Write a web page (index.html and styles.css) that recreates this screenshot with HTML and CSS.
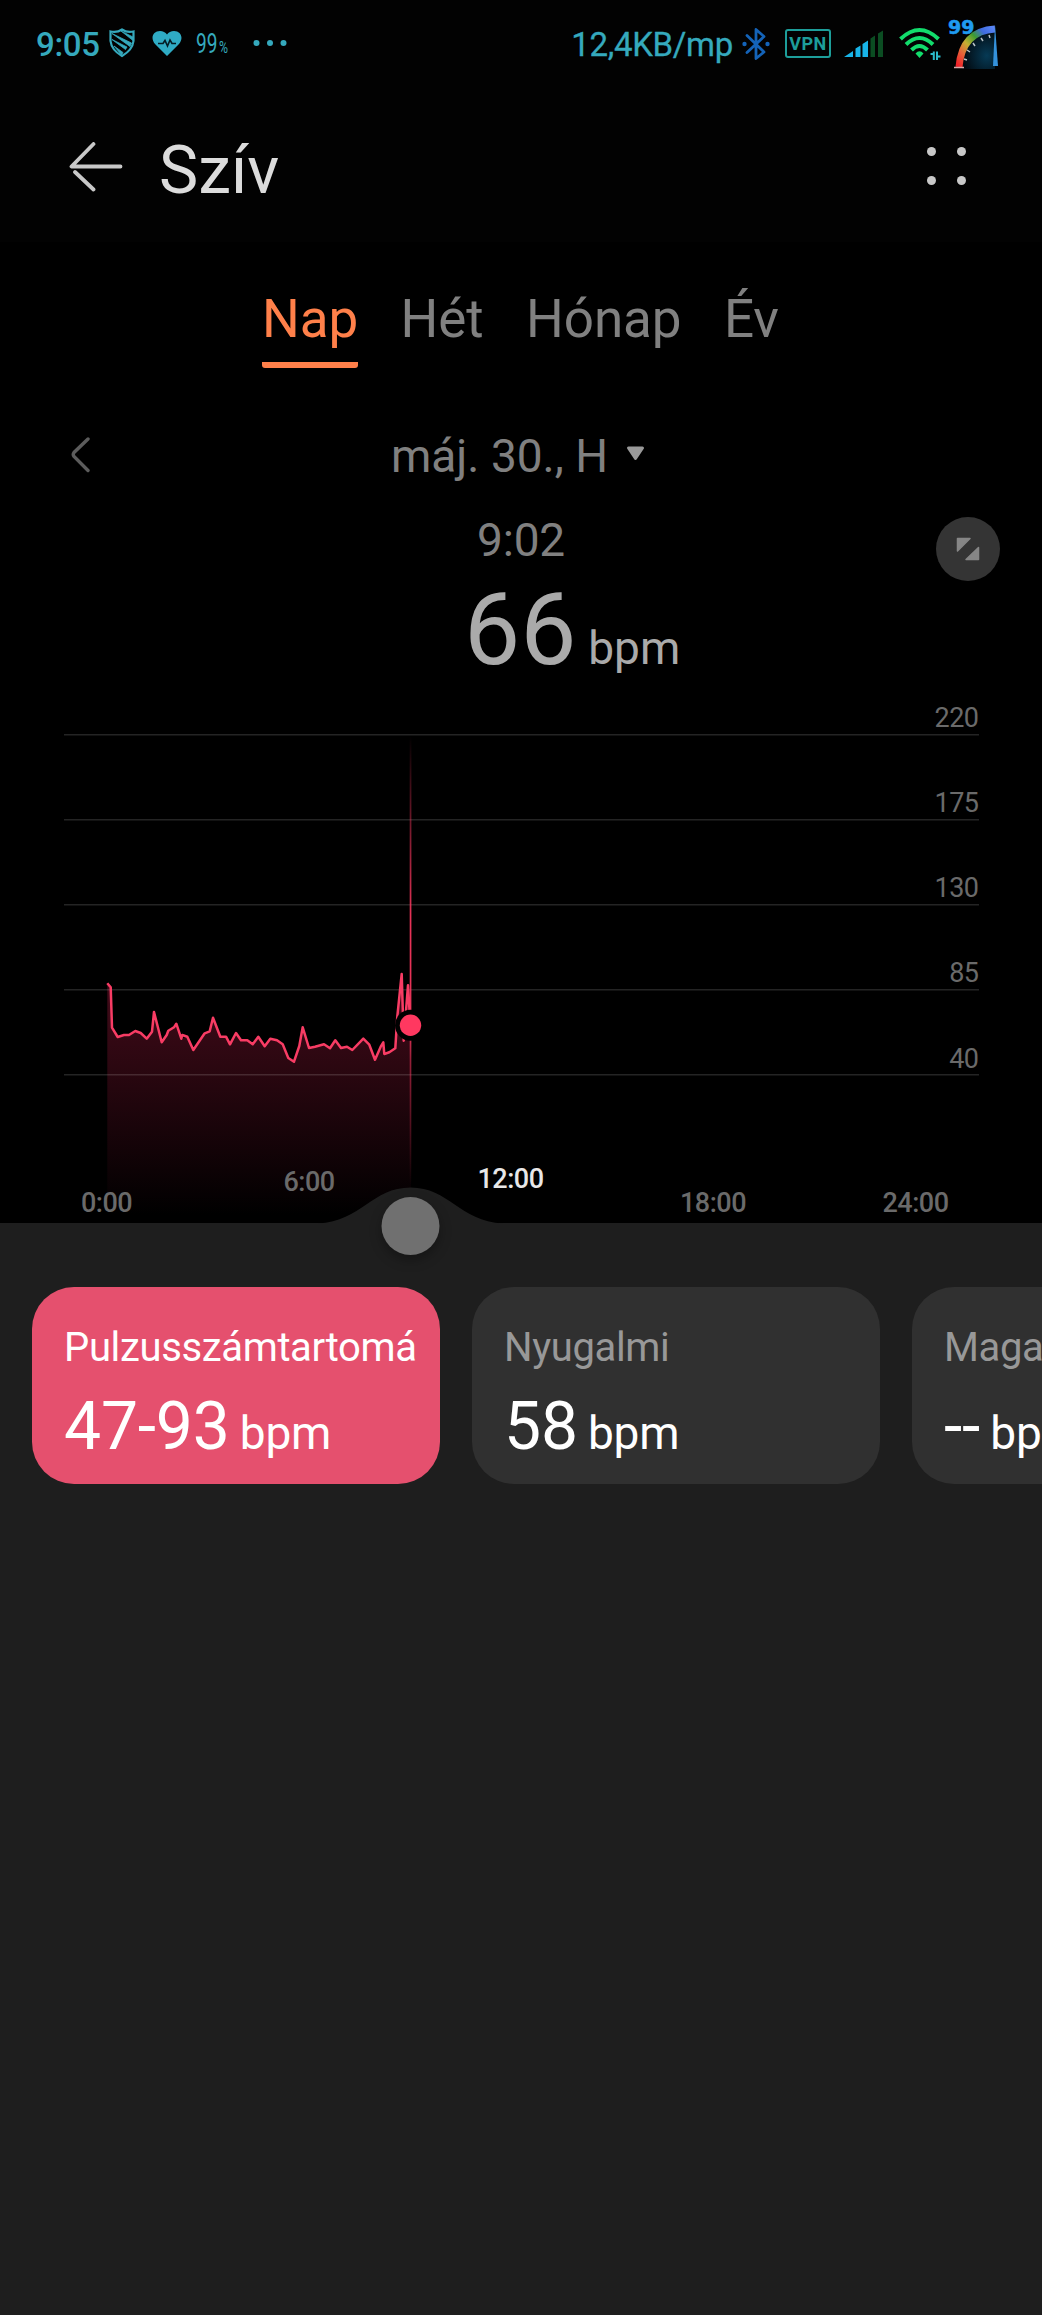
FILE: index.html
```html
<!DOCTYPE html>
<html lang="hu">
<head>
    <meta charset="UTF-8">
    <meta name="viewport" content="width=device-width, initial-scale=1.0">
    <title>Szív</title>
    <link rel="stylesheet" href="styles.css">
</head>
<body>
    <div class="status-bar">
        <div class="status-left">
            <span class="clock">9:05</span>
            <svg class="icon-shield" width="26" height="30" viewBox="0 0 26 30">
                <path d="M1.500 3.500 Q8 5 13 1.500 Q18 5 24.500 3.500 V13 Q23.500 22 13 28 Q2.500 22 1.500 13 Z" fill="none" stroke="#35a9bd" stroke-width="2.200"/>
                <path d="M12 3 L24 9 V12.500 Z M3 5.500 L22.500 15 L21 18.500 Z M3 11.500 L18 19 L16.500 21.500 Z M5 18 L14 24.500 L12.500 27 Z" fill="#35a9bd" stroke="#35a9bd" stroke-width="0.800"/>
            </svg>
            <svg class="icon-heart" width="30" height="27" viewBox="0 0 30 27">
                <path d="M15 26 L3 14 C-2 8 1 1 8 1 C11 1 13.500 2.500 15 4.500 C16.500 2.500 19 1 22 1 C29 1 32 8 27 14 Z" fill="#2fabc4"/>
                <path d="M6 13.500 H11 L13 10.500 L15.500 16 L18 10 L20 13.500 H24" fill="none" stroke="#041c24" stroke-width="1.600"/>
            </svg>
            <svg class="battery" width="34" height="30" viewBox="0 0 34 30">
                <text x="0" y="24" font-size="28" textLength="21.500" lengthAdjust="spacingAndGlyphs">99</text>
                <text x="23" y="24" font-size="16" textLength="9" lengthAdjust="spacingAndGlyphs">%</text>
            </svg>
            <svg class="icon-more" width="34" height="8" viewBox="0 0 34 8">
                <g fill="#35a9bd"><circle cx="3.500" cy="4" r="3"/><circle cx="17" cy="4" r="3"/><circle cx="30.500" cy="4" r="3"/></g>
            </svg>
        </div>
        <div class="status-right">
            <span class="speed">12,4KB/mp</span>
            <svg class="icon-bt" width="28" height="34" viewBox="0 0 28 34">
                <path d="M5 8.500 L22 25 L14 31.500 V2.500 L22 9.500 L5 25.500" fill="none" stroke="#1463b8" stroke-width="2.800" stroke-linejoin="round" stroke-linecap="round"/>
                <circle cx="2.500" cy="17" r="2.200" fill="#1463b8"/><circle cx="25.500" cy="17" r="2.200" fill="#1463b8"/>
            </svg>
            <span class="vpn">VPN</span>
            <svg class="icon-signal" width="40" height="28" viewBox="0 0 40 28">
                <path d="M0 27 L9 21 V27 Z M11.500 27 V18.500 L16.500 15.500 V27 Z M18.500 27 V14 L24 10.500 V27 Z" fill="#18b4e8"/>
                <path d="M26.500 27 V8.500 L31 5.500 V27 Z M34 27 V3.500 L39 0.500 V27 Z" fill="#0b4d22"/>
            </svg>
            <svg class="icon-wifi" width="42" height="34" viewBox="0 0 42 34">
                <g fill="none" stroke="#12dc6c" stroke-width="4">
                    <path d="M1.500 12 Q20.500 -6 39.500 12"/>
                    <path d="M7 17.500 Q20.500 4.500 34 17.500"/>
                    <path d="M12.500 23 Q20.500 15 28.500 23"/>
                </g>
                <path d="M16.500 26.500 Q20.500 22 24.500 26.500 L20.500 31 Z" fill="#12dc6c"/>
                <path d="M31.500 27 H34 M34.800 24.500 V33 M38 24.500 V33 M39 29.500 H41.500" stroke="#2bb9c9" stroke-width="2" fill="none"/>
            </svg>
            <svg class="icon-gauge" width="54" height="52" viewBox="0 0 54 52">
                <defs>
                    <linearGradient id="arc" x1="0" y1="1" x2="1" y2="0">
                        <stop offset="0" stop-color="#f01f28"/>
                        <stop offset=".22" stop-color="#e8623a"/>
                        <stop offset=".42" stop-color="#c3b032"/>
                        <stop offset=".62" stop-color="#3c9c30"/>
                        <stop offset=".8" stop-color="#3f6be0"/>
                        <stop offset="1" stop-color="#5a86f5"/>
                    </linearGradient>
                    <radialGradient id="glow" cx=".75" cy=".65" r=".7">
                        <stop offset="0" stop-color="#063a55"/>
                        <stop offset="1" stop-color="#020b12"/>
                    </radialGradient>
                </defs>
                <path d="M14 49 Q17 16 47 13 V51 H14 Z" fill="url(#glow)"/>
                <path d="M11 49 Q14 13 47 11" fill="none" stroke="url(#arc)" stroke-width="7"/>
                <path d="M16 41 L19 42 M19 32 L22 34 M25 25 L27 28 M33 20 L35 23 M41 17 L42 20" stroke="#b9c3c8" stroke-width="1.500"/>
                <path d="M6 49.500 H16" stroke="#d9a9a9" stroke-width="1.500"/>
                <path d="M47 7 L50 48 H45 Z" fill="#3492dc"/>
                <text x="0" y="16" class="gauge-num">99</text>
            </svg>
        </div>
    </div>

    <div class="header">
        <svg class="back" width="54" height="50" viewBox="0 0 54 50">
            <path d="M24.500 2 L2.500 24.500 H51.500 M6 30 L24.500 47.500" fill="none" stroke="#c8c8c8" stroke-width="3.800" stroke-linecap="round" stroke-linejoin="round"/>
        </svg>
        <h1>Szív</h1>
        <div class="menu"><i></i><i></i><i></i><i></i></div>
    </div>

    <div class="tabs">
        <div class="tab active">Nap</div>
        <div class="tab">Hét</div>
        <div class="tab">Hónap</div>
        <div class="tab">Év</div>
    </div>

    <div class="date-row">
        <svg class="prev" width="19" height="36" viewBox="0 0 19 36">
            <path d="M17 2 L3 15.500 Q1.500 17.500 3 19.500 L17 33.500" fill="none" stroke="#5c5c5c" stroke-width="3.400" stroke-linecap="round"/>
        </svg>
        <div class="date">máj. 30., H
            <svg width="19" height="15" viewBox="0 0 19 15"><path d="M2.500 2 H16.500 L9.500 12.500 Z" fill="#999" stroke="#999" stroke-width="3" stroke-linejoin="round"/></svg>
        </div>
    </div>

    <div class="reading">
        <div class="time">9:02</div>
        <div class="value">66 <span>bpm</span></div>
        <div class="expand">
            <svg width="24" height="24" viewBox="0 0 24 24"><path d="M1.500 1.500 H14 L1.500 14 Z M22.500 10.500 V22.500 H10 Z" fill="#868686" stroke="#868686" stroke-width="1.500" stroke-linejoin="round"/></svg>
        </div>
    </div>

    <svg class="chart" width="1042" height="523" viewBox="0 0 1042 523">
        <defs>
            <linearGradient id="area" gradientUnits="userSpaceOnUse" x1="0" y1="280" x2="0" y2="515">
                <stop offset="0" stop-color="#440b1a"/>
                <stop offset="1" stop-color="#000"/>
            </linearGradient>
            <linearGradient id="cursor" gradientUnits="userSpaceOnUse" x1="0" y1="36" x2="0" y2="485">
                <stop offset="0" stop-color="#ff3860" stop-opacity="0"/>
                <stop offset=".4" stop-color="#ff3860" stop-opacity=".9"/>
                <stop offset=".65" stop-color="#ff3860" stop-opacity=".9"/>
                <stop offset=".72" stop-color="#ff3860" stop-opacity=".5"/>
                <stop offset="1" stop-color="#ff3860" stop-opacity="0"/>
            </linearGradient>
        </defs>
        <path fill="url(#area)" d="M107.300 523 V283.300 L110.700 287.300 L112 327.700 L117.700 337 L124 335 L129 335 L135.300 331 L140.700 333 L146.700 338.700 L152 331.700 L154 312 L161.700 342.300 L168.300 330.700 L176.300 323.700 L181.300 338.700 L187.300 336.700 L193.300 350 L204.700 333.300 L209.700 331.300 L213 317.700 L220.300 336.700 L226 336.700 L230 344.300 L236 333 L241 340.300 L247.300 340.300 L252.700 344.300 L258.300 336.700 L264.700 346.300 L270.300 338.700 L277 340.300 L282.700 344.300 L288.300 358 L294 361.700 L299.300 346 L302.700 327.300 L309 348 L315 346.700 L324 344.300 L330 348.300 L335.300 340.300 L341 348 L347 346.700 L352.300 350 L363.300 338.700 L369.300 344.700 L375 359.700 L380.700 346.700 L383.300 342.300 L384.300 354 L389.300 352.300 L395.300 348.300 L397.300 316.700 L401.700 274 L403.700 340.700 L408 285.300 L411 323.300 V523 Z"/>
        <g class="grid">
            <path d="M64 34.700 H979"/>
            <path d="M64 119.700 H979"/>
            <path d="M64 204.700 H979"/>
            <path d="M64 289.700 H979"/>
            <path d="M64 374.700 H979"/>
        </g>
        <polyline class="line" points="107.300,283.300 110.700,287.300 112,327.700 117.700,337 124,335 129,335 135.300,331 140.700,333 146.700,338.700 152,331.700 154,312 161.700,342.300 166.700,335 168.300,330.700 174,327.300 176.300,323.700 181.300,338.700 182.300,335 187.300,336.700 193.300,350 204.700,333.300 209.700,331.300 213,317.700 220.300,336.700 226,336.700 230,344.300 236,333 241,340.300 247.300,340.300 252.700,344.300 258.300,336.700 264.700,346.300 270.300,338.700 277,340.300 282.700,344.300 288.300,358 294,361.700 299.300,346 302.700,327.300 309,348 315,346.700 324,344.300 330,348.300 335.300,340.300 341,348 347,346.700 352.300,350 363.300,338.700 369.300,344.700 375,359.700 380.700,346.700 383.300,342.300 384.300,354 389.300,352.300 395.300,348.300 397.300,316.700 401.700,274 403.700,340.700 408,285.300 410.300,323.300"/>
        <rect x="409.700" y="36" width="1.700" height="449" fill="url(#cursor)"/>
        <circle cx="410.500" cy="325.300" r="15.500" fill="#000"/>
        <circle cx="410.500" cy="325.300" r="10.700" fill="#ff3860"/>
        <g class="y-labels">
            <text x="978.500" y="27">220</text>
            <text x="978.500" y="112">175</text>
            <text x="978.500" y="197">130</text>
            <text x="978.500" y="282">85</text>
            <text x="978.500" y="368">40</text>
        </g>
        <g class="x-labels">
            <text x="106.500" y="511.500">0:00</text>
            <text x="309" y="491">6:00</text>
            <text x="510.500" y="487.500" class="current">12:00</text>
            <text x="713" y="511.500">18:00</text>
            <text x="915.500" y="511.500">24:00</text>
        </g>
        <!-- slider handle -->
        <path d="M318 523.500 C362 521 372 487.500 410.500 487.500 C449 487.500 459 521 503 523.500 Z" fill="#1e1e1e"/>
        <circle class="knob" cx="410.500" cy="526" r="29" fill="#707070"/>
    </svg>

    <div class="sheet">
        <div class="cards">
            <div class="card selected">
                <div class="label">Pulzusszámtartomá</div>
                <div class="num">47-93 <span>bpm</span></div>
            </div>
            <div class="card">
                <div class="label">Nyugalmi</div>
                <div class="num">58 <span>bpm</span></div>
            </div>
            <div class="card">
                <div class="label">Maga</div>
                <div class="num">-- <span>bpm</span></div>
            </div>
        </div>
    </div>
</body>
</html>
```
FILE: styles.css
```css
* {
    box-sizing: border-box;
}
body {
    margin: 0;
    width: 1042px;
    height: 2315px;
    overflow: hidden;
    display: flex;
    flex-direction: column;
    background: #000;
    font-family: Roboto, sans-serif;
    color: #fff;
}
svg {
    display: block;
    flex: none;
}
.status-bar {
    height: 90px;
    padding: 0 40px 0 36px;
    display: flex;
    justify-content: space-between;
    background: #020202;
    color: #35a9bd;
}
.status-left, .status-right {
    display: flex;
    align-items: center;
}
.clock, .speed {
    font-size: 33px;
    font-weight: 500;
    line-height: 90px;
    letter-spacing: -0.3px;
}
.speed {
    font-weight: 400;
    -webkit-text-stroke: 0.3px #35a9bd;
}
.icon-shield {
    margin: -4px 0 0 9px;
}
.icon-heart {
    margin-left: 17px;
    margin-top: -3px;
}
.battery {
    margin-left: 14px;
    margin-top: -3px;
    fill: #35a9bd;
}
.icon-more {
    margin-left: 23px;
    margin-top: -4px;
}
.icon-bt {
    margin-left: 9px;
    margin-top: -3px;
}
.vpn {
    margin: -3px 0 0 15px;
    width: 46px;
    height: 29px;
    border: 2px solid #1d9e9a;
    border-radius: 3px;
    color: #1d9e9a;
    font-size: 18px;
    font-weight: 700;
    letter-spacing: 0.5px;
    line-height: 26px;
    text-align: center;
}
.icon-signal {
    margin-left: 13px;
    margin-top: -3px;
}
.icon-wifi {
    margin-left: 15px;
    margin-top: -2px;
}
.icon-gauge {
    margin-left: 7px;
    margin-top: -3px;
}
.gauge-num {
    font-family: "DejaVu Sans", sans-serif;
    font-size: 19px;
    font-weight: 700;
    fill: #1f9bf0;
    stroke: #1f9bf0;
    stroke-width: 0.5px;
}
.header {
    height: 152px;
    padding: 0 76px 0 69px;
    display: flex;
    align-items: flex-start;
    background: #020202;
}
.back {
    margin-top: 52px;
}
h1 {
    margin: 41px 0 0 36px;
    font-size: 66px;
    font-weight: 400;
    line-height: 79px;
    color: #dcdcdc;
}
.menu {
    margin: 57px 0 0 auto;
    display: grid;
    grid-template-columns: 9px 9px;
    gap: 20px 21px;
}
.menu i {
    width: 9px;
    height: 9px;
    border-radius: 50%;
    background: #c8c8c8;
}
.tabs {
    height: 126px;
    padding: 46px 0 0 262px;
    display: flex;
    align-items: flex-start;
    gap: 42.500px;
    font-size: 53px;
    line-height: 62px;
    letter-spacing: -0.1px;
    color: #808080;
}
.tab {
    height: 80px;
}
.tab.active {
    color: #ff804a;
    border-bottom: 6px solid #ff804a;
    border-radius: 3px;
}
.date-row {
    height: 142px;
    padding: 60px 0 0 71px;
    display: flex;
    align-items: flex-start;
}
.prev {
    margin-top: 9px;
}
.date {
    margin-left: 301px;
    display: flex;
    gap: 18px;
    font-size: 46px;
    line-height: 57px;
    color: #808080;
}
.date svg {
    margin-top: 18px;
}
.reading {
    position: relative;
    height: 190px;
    text-align: center;
    color: #aaa;
}
.time {
    padding-top: 2px;
    font-size: 46px;
    line-height: 56px;
    letter-spacing: -0.2px;
    color: #808080;
}
.value {
    padding: 3px 0 0 464px;
    text-align: left;
    font-size: 100px;
    line-height: 118px;
    word-spacing: -13px;
}
.value span {
    font-size: 46px;
}
.expand {
    position: absolute;
    top: 7px;
    right: 42px;
    width: 64px;
    height: 64px;
    border-radius: 50%;
    background: #343434;
    display: flex;
    align-items: center;
    justify-content: center;
}
.chart {
    position: relative;
    overflow: visible;
}
.grid path {
    stroke: #fff;
    stroke-opacity: 0.14;
    stroke-width: 1.500px;
}
.line {
    fill: none;
    stroke: #f83c64;
    stroke-width: 2.500px;
    stroke-linejoin: round;
}
.y-labels text {
    font-size: 27px;
    letter-spacing: -0.5px;
    text-anchor: end;
    fill: #6a6a6a;
}
.x-labels text {
    font-size: 27px;
    font-weight: 500;
    letter-spacing: -0.5px;
    text-anchor: middle;
    fill: #6a6a6a;
}
.x-labels .current {
    fill: #e8e8e8;
}
.knob {
    filter: drop-shadow(0 5px 6px rgba(0, 0, 0, 0.3));
}
.sheet {
    flex: 1;
    padding: 64px 0 0 32px;
    background: #1e1e1e;
}
.cards {
    display: flex;
    gap: 32px;
    overflow: hidden;
}
.card {
    flex: none;
    width: 408px;
    height: 197px;
    padding: 36px 0 0 32px;
    border-radius: 42px;
    background: #303030;
}
.label {
    font-size: 40px;
    line-height: 50px;
    letter-spacing: -0.35px;
    color: #989898;
}
.num {
    margin-top: 15px;
    font-size: 66px;
    line-height: 78px;
    letter-spacing: -0.2px;
    word-spacing: -6px;
}
.num span {
    font-size: 46px;
}
.selected {
    background: #e5506e;
}
.selected .label {
    color: #fff;
}
```
